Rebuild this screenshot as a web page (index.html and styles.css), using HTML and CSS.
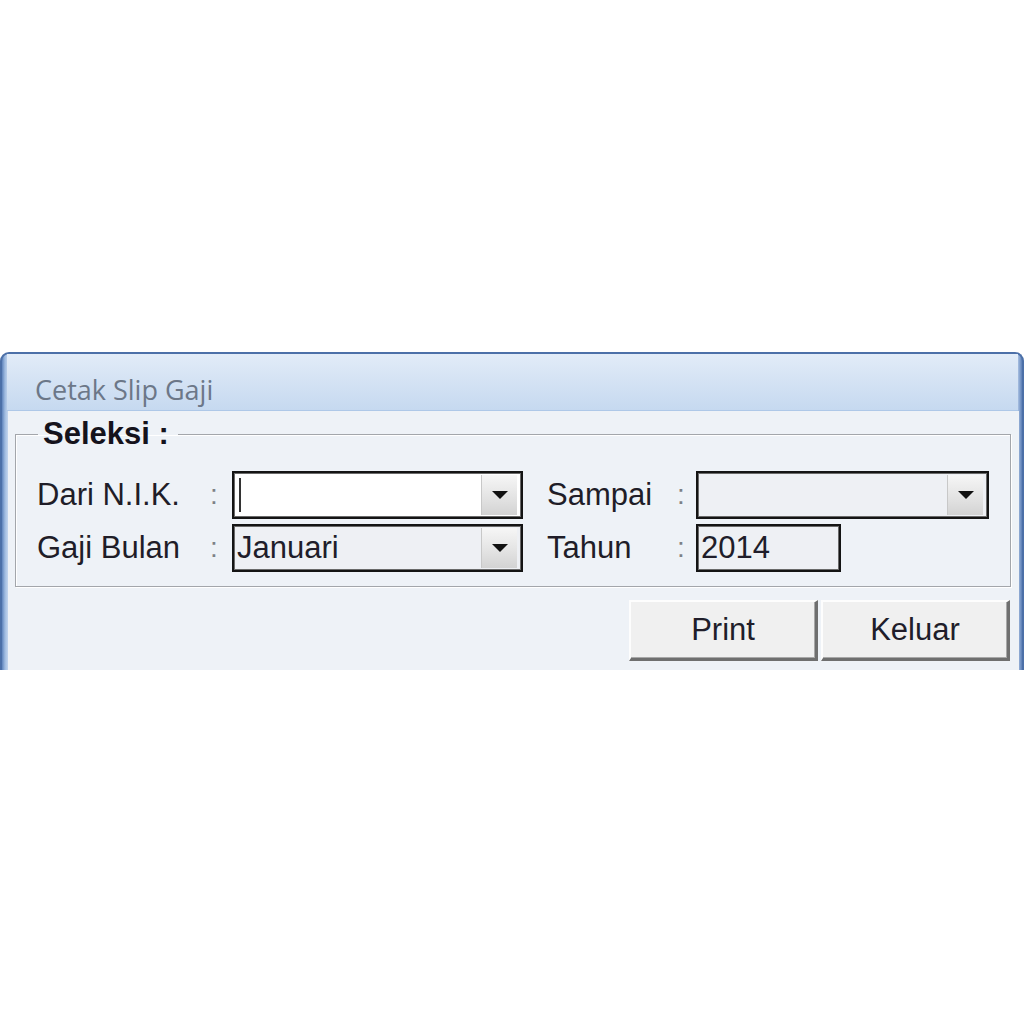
FILE: index.html
```html
<!DOCTYPE html>
<html lang="id">
  <head>
    <meta charset="UTF-8" />
    <meta name="viewport" content="width=device-width, initial-scale=1.0" />
    <link rel="stylesheet" href="styles.css">
    <title>Cetak Slip Gaji</title>
  </head>
  <body>
    <div class="window">
      <div class="titlebar">Cetak Slip Gaji</div>
      <div class="client">
        <fieldset class="seleksi">
          <legend>Seleksi :</legend>
          <div class="row">
            <span class="label">Dari N.I.K.</span>
            <span class="colon">:</span>
            <div class="combo combo-white">
              <span class="caret"></span>
              <span class="value"></span>
              <span class="drop"><i></i></span>
            </div>
            <span class="label label-right">Sampai</span>
            <span class="colon">:</span>
            <div class="combo combo-wide">
              <span class="value"></span>
              <span class="drop"><i></i></span>
            </div>
          </div>
          <div class="row">
            <span class="label">Gaji Bulan</span>
            <span class="colon">:</span>
            <div class="combo">
              <span class="value">Januari</span>
              <span class="drop"><i></i></span>
            </div>
            <span class="label label-right">Tahun</span>
            <span class="colon">:</span>
            <div class="textbox">2014</div>
          </div>
        </fieldset>
        <div class="buttons">
          <button class="btn">Print</button>
          <button class="btn">Keluar</button>
        </div>
      </div>
    </div>
  </body>
</html>
```

FILE: styles.css
```css
body {
    margin: 0;
    background: #fff;
    font-family: "Liberation Sans", Arial, sans-serif;
    color: #1f1d28;
}

/* jendela */
.window {
    margin-top: 352px;
    height: 316px;
    border: solid #4c70a8;
    border-width: 2px 2px 0 2px;
    border-radius: 9px 9px 0 0;
    background: linear-gradient(to right, #5f84bc, #9fbbe0 3px, #c4d6ee 6px, #c9daf0 10px, #c9daf0 calc(100% - 8px), #a8c0e2 calc(100% - 4px), #5a7db5);
    display: flex;
    flex-direction: column;
}
.titlebar {
    height: 42px;
    margin: 0 4px 0 5px;
    padding: 14px 0 0 28px;
    display: flex;
    align-items: center;
    font-family: "Open Sans", "Noto Sans", sans-serif;
    font-size: 27px;
    color: #6c7788;
    background: linear-gradient(#e2ecf8, #d5e3f4 45%, #c6d9f0);
    border-bottom: 1px solid #aec8e8;
}
.client {
    flex: 1;
    margin: 0 3px 0 6px;
    background: #eef2f7;
    padding: 8px 8px 0 7px;
}

/* group box */
.seleksi {
    margin: 0;
    padding: 22px 10px 14px 21px;
    border: 1px solid #a3a6ab;
    box-shadow: inset 1px 1px 0 #fff, 1px 1px 0 #fff;
}
.seleksi legend {
    padding: 0 9px 0 5px;
    margin-left: 1px;
    font-weight: bold;
    font-size: 31px;
    line-height: 30px;
    color: #15131c;
}

.row {
    display: flex;
    align-items: center;
    height: 48px;
}
.row + .row {
    margin-top: 5px;
}
.label {
    width: 173px;
    font-size: 31px;
}
.label-right {
    width: 130px;
    margin-left: 24px;
}
.colon {
    width: 22px;
    font-size: 28px;
    color: #7e8187;
}
.label-right + .colon {
    width: 19px;
}

/* combo box */
.combo {
    width: 291px;
    height: 48px;
    box-sizing: border-box;
    border: 2px solid #141414;
    box-shadow: inset 0 0 0 1px #6a6a6a;
    background: #eef0f4;
    display: flex;
    align-items: center;
    padding: 0 4px 0 3px;
}
.combo-white {
    background: #fff;
}
.combo-wide {
    width: 293px;
}
.combo .value {
    flex: 1;
    font-size: 31px;
    color: #201d2a;
}
.caret {
    width: 2px;
    height: 34px;
    background: #333;
    margin-left: 2px;
}
.drop {
    width: 35px;
    height: 40px;
    background: linear-gradient(#f6f6f6, #e2e2e2 60%, #d3d3d3);
    border-left: 1px solid #c8c8c8;
    display: flex;
    align-items: center;
    justify-content: center;
}
.drop i {
    width: 0;
    height: 0;
    border-left: 8px solid transparent;
    border-right: 8px solid transparent;
    border-top: 8px solid #111;
}

.textbox {
    width: 145px;
    height: 48px;
    box-sizing: border-box;
    border: 2px solid #141414;
    box-shadow: inset 0 0 0 1px #6a6a6a;
    background: #eef0f4;
    font-size: 31px;
    line-height: 44px;
    padding-left: 3px;
    color: #201d2a;
}

/* tombol */
.buttons {
    display: flex;
    justify-content: flex-end;
    gap: 3px;
    margin-top: 13px;
    padding-right: 1px;
}
.btn {
    width: 189px;
    height: 61px;
    font-family: "Liberation Sans", Arial, sans-serif;
    font-size: 31px;
    color: #201d2a;
    background: #f0f0f0;
    border: none;
    border-top: 2px solid #fdfdfd;
    border-left: 2px solid #fdfdfd;
    border-right: 3px solid #6f6f6f;
    border-bottom: 3px solid #6f6f6f;
    box-shadow: inset -1px -1px 0 #a8a8a8;
    padding: 0;
}
```
